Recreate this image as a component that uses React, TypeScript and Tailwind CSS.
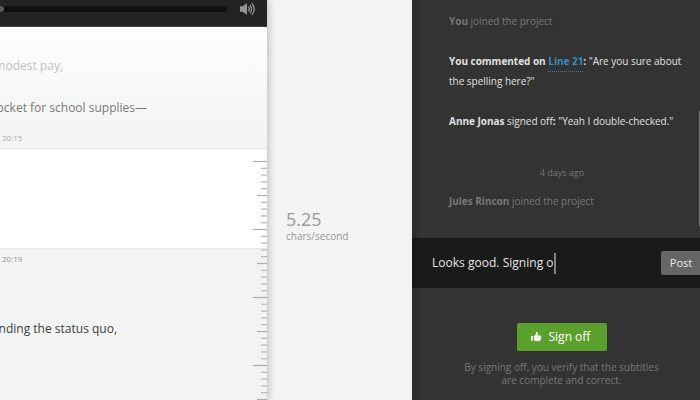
import React from "react";

const ticks = Array.from({ length: 36 }, (_, i) => ({
  y: 161.5 + i * 6.8,
  length: i % 10 === 0 ? 14 : i % 5 === 0 ? 10 : 6,
}));

function Ruler() {
  return (
    <svg className="absolute top-0 right-0" width="14" height="400" aria-hidden="true">
      {ticks.map((t) => (
        <rect
          key={t.y}
          x={14 - t.length}
          y={t.y - 0.6}
          width={t.length}
          height="1.2"
          fill={t.length === 6 ? "#b4b5b7" : "#aaabad"}
        />
      ))}
    </svg>
  );
}

function VolumeIcon() {
  return (
    <svg width="16" height="14" viewBox="0 0 16 14" aria-hidden="true">
      <path d="M0 4.3h2.5L7 1.3v11.4L2.5 9.7H0z" fill="#949494" />
      <path d="M8.4 4.6q1.8 2.4 0 4.8M10 2.8q3 4.2 0 8.4M11.8 1.2q5 5.8 0 11.6" fill="none" stroke="#8b8b8b" strokeWidth="1.4" />
    </svg>
  );
}

function ThumbIcon() {
  return (
    <svg width="11" height="10" viewBox="0 0 11 10" aria-hidden="true">
      <path d="M0 4h2.2v4.6H0zM3 3.9C4.3 3.5 4.9 2.2 5 .5 5.1-.2 7-.1 7 1.4c0 .9-.3 1.4-.5 2h2.7c1.3 0 1.3 1.2.8 1.5.5.5.4 1.2-.1 1.4.3.5.1 1.2-.4 1.4.2 1-.4 1.5-1.5 1.5H5.7C4.6 9.2 4 8.7 3 8.5z" fill="#f4f4f4" />
    </svg>
  );
}

function SubtitleEditor() {
  return (
    <section className="relative h-full w-[267px] shrink-0 overflow-hidden bg-[#f2f3f5] shadow-[1px_0_8px_rgba(0,0,0,0.25)]">
      <header className="flex h-[27px] items-start border-b border-[#3a3b3d] bg-[#222325]">
        <div className="mt-[6px] flex h-[6px] w-[227px] rounded-r-[3px] bg-[#101010]">
          <div className="h-[6px] w-[4px] rounded-r-[3px] bg-[#5a5a5a]" />
        </div>
        <div className="mt-[2px] ml-[13px]">
          <VolumeIcon />
        </div>
      </header>
      <div className="h-[122px] overflow-hidden border-b border-[#e8e9ea] bg-gradient-to-b from-[#fefefe] to-[#f2f3f4]">
        <p className="mt-[29px] flex h-5 w-[63px] justify-end text-[12px] leading-5 whitespace-nowrap text-[#c2c2c2]">modest pay,</p>
        <p className="mt-[22px] flex h-5 w-[147px] justify-end text-[12px] leading-5 whitespace-nowrap text-[#7a7a7a]">pocket for school supplies—</p>
        <p className="mt-[12px] ml-[2px] h-4 text-[8px] leading-4 text-[#aaa]">20:15</p>
      </div>
      <div className="h-[100px] border-b border-[#e8e9ea] bg-white" />
      <div className="h-[151px] pt-[9px]">
        <div className="flow-root h-[15px] w-[111px] bg-[#f4f4f4] pl-[2px]">
          <p className="-mt-[7px] h-4 text-[8px] leading-4 text-[#8f8f8f]">20:19</p>
        </div>
        <div className="mt-[58px] flow-root h-[69px] w-[248px] bg-[#f4f4f4]">
          <p className="-mt-[12px] flex h-5 w-[117px] justify-end text-[12px] leading-5 whitespace-nowrap text-[#404040]">defending the status quo,</p>
        </div>
      </div>
      <Ruler />
    </section>
  );
}

function ActivityPanel() {
  return (
    <aside className="relative flex h-full w-[288px] shrink-0 flex-col bg-[#333]">
      <div className="h-[238px] pl-[37px] text-[10px] leading-5 tracking-[-0.02px] text-[#e0e0e0]">
        <p className="mt-[11px] text-[#777]"><b>You</b> joined the project</p>
        <p className="mt-[20px] whitespace-nowrap">
          <b>You commented on <span className="border-b border-dotted border-[#3a78a6] pb-[3px] text-[#3c8ac0]">Line 21</span>:</b> "Are you sure about
          <br />
          the spelling here?"
        </p>
        <p className="mt-[20px] whitespace-nowrap"><b>Anne Jonas</b> signed off<b>:</b> "Yeah I double-checked."</p>
        <p className="mt-[32px] w-[226px] text-center text-[9px] text-[#777]">4 days ago</p>
        <p className="mt-[8px] text-[#777]"><b>Jules Rincon</b> joined the project</p>
      </div>
      <div className="flex h-[50px] items-center justify-between bg-[#1a1a1a] pl-5">
        <div className="flex items-center text-[12px] text-[#e5e5e5]">
          <span className="tracking-[0.02px]">Looks good. Signing o</span>
          <span className="h-[21px] w-[2px] bg-[#858585]" />
        </div>
        <button className="h-6 w-[39px] rounded-l-[2px] bg-[#666] pl-px text-[11px] text-[#e8e8e8]">Post</button>
      </div>
      <div className="flex flex-col items-center pt-[35px] pl-[11px]">
        <button className="flex h-7 w-[90px] items-center rounded-[2px] bg-[#5aa02c] pb-px pl-[14px] text-[12px] text-white">
          <ThumbIcon />
          <span className="ml-[7px]">Sign off</span>
        </button>
        <p className="mt-[10px] text-center text-[10px] leading-[13px] whitespace-nowrap text-[#777]">
          By signing off, you verify that the subtitles
          <br />
          are complete and correct.
        </p>
      </div>
      <div className="absolute inset-y-0 left-0 w-[10px] bg-gradient-to-r from-black/15 to-transparent" />
      <div className="absolute top-[111px] right-0 h-[115px] w-[1px] bg-[#747474]" />
    </aside>
  );
}

export default function App() {
  return (
    <main className="flex h-[400px] w-[700px] overflow-hidden bg-[#f2f3f5] font-['Open_Sans',sans-serif]">
      <SubtitleEditor />
      <div className="w-[145px] shrink-0 pt-[208px] pl-[19px] text-[#999]">
        <p className="text-[18px] leading-[22px]">5.25</p>
        <p className="text-[10px] leading-[13px]">chars/second</p>
      </div>
      <ActivityPanel />
    </main>
  );
}
